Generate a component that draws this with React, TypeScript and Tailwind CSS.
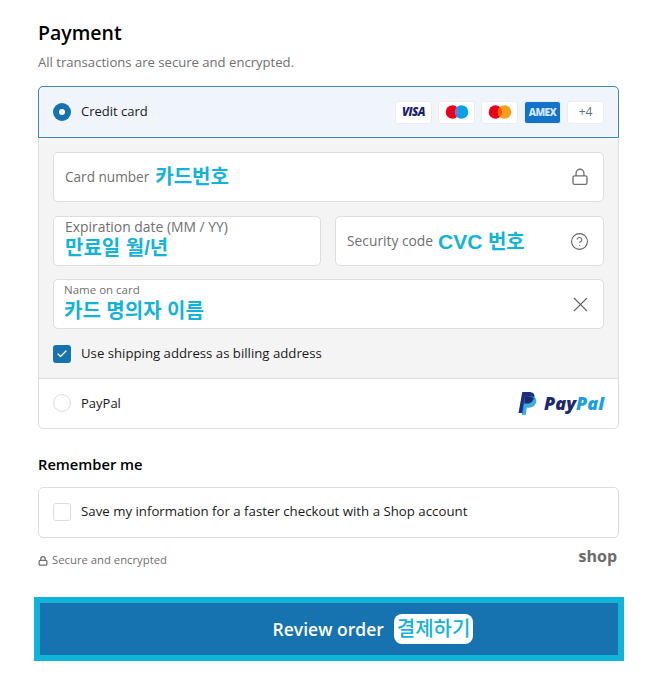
import { CircleHelp, Check, X } from 'lucide-react'

const font = "font-['Open_Sans','Noto_Sans_CJK_KR',sans-serif]"
const note = "font-['Liberation_Sans','Noto_Sans_CJK_KR',sans-serif] font-bold text-[#12b3d9]"

function CardBadge({ children, className = 'bg-white' }: { children?: React.ReactNode; className?: string }) {
  return (
    <div className={`flex h-[23px] w-[37px] items-center justify-center rounded-[3px] border border-[#ececec] ${className}`}>
      {children}
    </div>
  )
}

function Circles({ left, right, mid }: { left: string; right: string; mid: string }) {
  return (
    <svg width="24" height="16" viewBox="0 0 24 16">
      <circle cx="7.5" cy="8" r="6.8" fill={left} />
      <circle cx="16.5" cy="8" r="6.8" fill={right} />
      <path d="M12 2.9a6.8 6.8 0 0 1 0 10.2a6.8 6.8 0 0 1 0-10.2z" fill={mid} />
    </svg>
  )
}

function LockIcon({ size, stroke = 1.2 }: { size: number; stroke?: number }) {
  return (
    <svg width={size} height={size} viewBox="0 0 16 16" fill="none" stroke="#707070" strokeWidth={stroke}>
      <rect x="1.8" y="7" width="12.4" height="7.6" rx="1.4" />
      <path d="M4.5 7V4.6a3.5 3.5 0 0 1 7 0V7" />
    </svg>
  )
}

function PayPalMark() {
  return (
    <svg width="19" height="23" viewBox="0 0 18 22">
      <path d="M4 0h6.5c3.6 0 5.8 2 5.1 5.4-.7 3.7-3.5 5.6-7 5.6H6L4.6 20H.4z" fill="#1b2f80" />
      <path d="M6.3 4h5.6c3.6 0 6.2 1.7 5.5 5.4-.7 3.7-3.5 5.6-7 5.6H8.4l-1.2 7H3.6z" fill="#1c9fdc" opacity="0.85" />
      <path d="M6.3 4h3.4c2 0 4.6 1 5.2 2.2-.8 3-3.2 4.8-6.3 4.8H6z" fill="#1e2a6e" />
    </svg>
  )
}

export default function App() {
  return (
    <div className={`${font} min-h-[700px] w-[656px] bg-white pl-[38px] pt-[19px] text-[#1a1a1a]`}>
      <div className="w-[581px]">
        <h1 className="text-[19.5px] font-semibold leading-[28px] text-black">Payment</h1>
        <p className="mt-[6px] text-[13.1px] leading-[18px] text-[#707070]">All transactions are secure and encrypted.</p>

        <div className="mt-[15px] rounded-[5px] border border-[#dedede]">
          <div className="relative z-10 -m-px flex h-[52px] items-center justify-between rounded-t-[5px] border border-[#3f88b3] bg-[#f0f5fc] pl-[14px] pr-[14px]">
            <div className="flex items-center gap-[10px]">
              <div className="flex h-[18px] w-[18px] items-center justify-center rounded-full bg-[#1773b0]">
                <div className="h-[6px] w-[6px] rounded-full bg-white" />
              </div>
              <span className="text-[13px]">Credit card</span>
            </div>
            <div className="flex gap-[6px]">
              <CardBadge>
                <span className="text-[11.5px] font-extrabold italic tracking-[-0.5px] text-[#1a1f71]">VISA</span>
              </CardBadge>
              <CardBadge>
                <Circles left="#eb001b" right="#00a2e5" mid="#7375cf" />
              </CardBadge>
              <CardBadge>
                <Circles left="#eb001b" right="#f79e1b" mid="#ff5f00" />
              </CardBadge>
              <CardBadge className="border-[#1173c9] bg-[#1173c9]">
                <span className="text-[10px] font-extrabold tracking-[-0.5px] text-[#cfe6fa]">AMEX</span>
              </CardBadge>
              <CardBadge>
                <span className="text-[12px] text-[#5f7280]">+4</span>
              </CardBadge>
            </div>
          </div>

          <div className="flex flex-col bg-[#f4f4f4] px-[14px] pb-[14px] pt-[15px]">
            <div className="flex h-[50px] items-center justify-between rounded-[5px] border border-[#dedede] bg-white pl-[11px] pr-[14px]">
              <div className="flex items-center gap-[6px]">
                <span className="text-[13.6px] text-[#707070]">Card number</span>
                <span className={`${note} text-[20px] leading-none`}>카드번호</span>
              </div>
              <LockIcon size={18} />
            </div>

            <div className="mt-[14px] flex gap-[14px]">
              <div className="flex h-[50px] w-[268px] flex-col rounded-[5px] border border-[#dedede] bg-white pl-[11px] pt-[2px]">
                <span className="text-[13.9px] leading-[16px] text-[#707070]">Expiration date (MM / YY)</span>
                <span className={`${note} mt-[2px] text-[20px] leading-[23px]`}>만료일 월/년</span>
              </div>
              <div className="flex h-[50px] flex-1 items-center justify-between rounded-[5px] border border-[#dedede] bg-white pl-[11px] pr-[14px]">
                <div className="flex items-center gap-[5px]">
                  <span className="text-[13.8px] text-[#707070]">Security code</span>
                  <span className={`${note} text-[20px] leading-none`}><span className="text-[21px]">CVC</span> 번호</span>
                </div>
                <CircleHelp size={19} strokeWidth={1.4} className="text-[#666666]" />
              </div>
            </div>

            <div className="mt-[13px] flex h-[50px] items-center justify-between rounded-[5px] border border-[#dedede] bg-white pl-[10px] pr-[10px]">
              <div className="flex flex-col self-start pt-[3px]">
                <span className="text-[11.5px] leading-[14px] text-[#707070]">Name on card</span>
                <span className={`${note} mt-[2px] text-[20px] leading-[24px]`}>카드 명의자 이름</span>
              </div>
              <X size={25} strokeWidth={1.1} className="text-[#666666]" />
            </div>

            <div className="mt-[15px] flex items-center gap-[10px]">
              <div className="flex h-[18px] w-[18px] items-center justify-center rounded-[3px] bg-[#1773b0]">
                <Check size={12} strokeWidth={2.5} className="text-white" />
              </div>
              <span className="text-[13.2px]">Use shipping address as billing address</span>
            </div>
          </div>

          <div className="flex h-[50px] items-center justify-between rounded-b-[5px] border-t border-[#dedede] bg-white px-[14px]">
            <div className="flex items-center gap-[10px]">
              <div className="h-[18px] w-[18px] rounded-full border border-[#dedede] bg-white" />
              <span className="text-[13px]">PayPal</span>
            </div>
            <div className="flex items-center gap-[7px]">
              <PayPalMark />
              <span className="text-[18px] font-extrabold italic leading-none text-[#1e2a6e]">
                Pay<span className="text-[#1c9fdc]">Pal</span>
              </span>
            </div>
          </div>
        </div>

        <h2 className="mt-[25px] text-[14.7px] font-semibold leading-[20px] text-black">Remember me</h2>
        <div className="mt-[13px] flex h-[51px] items-center gap-[10px] rounded-[5px] border border-[#dedede] bg-white pl-[14px]">
          <div className="h-[18px] w-[18px] rounded-[3px] border border-[#dedede] bg-white" />
          <span className="text-[13.25px]">Save my information for a faster checkout with a Shop account</span>
        </div>

        <div className="mt-[10px] flex h-[22px] items-center justify-between">
          <div className="flex items-center gap-[4px] pt-[4px]">
            <LockIcon size={10} stroke={2} />
            <span className="text-[11.3px] text-[#707070]">Secure and encrypted</span>
          </div>
          <span className="self-start pr-[2px] text-[16px] font-bold leading-none text-[#6b6b6b]">shop</span>
        </div>

        <div className="-ml-[4px] -mr-[5px] mt-[27px] flex h-[64px] items-center justify-center gap-[10px] border-[6px] border-[#12b3d9] bg-[#1773b0] pl-[88px]">
          <span className="text-[17.5px] font-semibold text-white">Review order</span>
          <span className="rounded-[8px] bg-white px-[3px] text-[20px] font-medium leading-[30px] text-[#12b3d9]">결제하기</span>
        </div>
      </div>
    </div>
  )
}
